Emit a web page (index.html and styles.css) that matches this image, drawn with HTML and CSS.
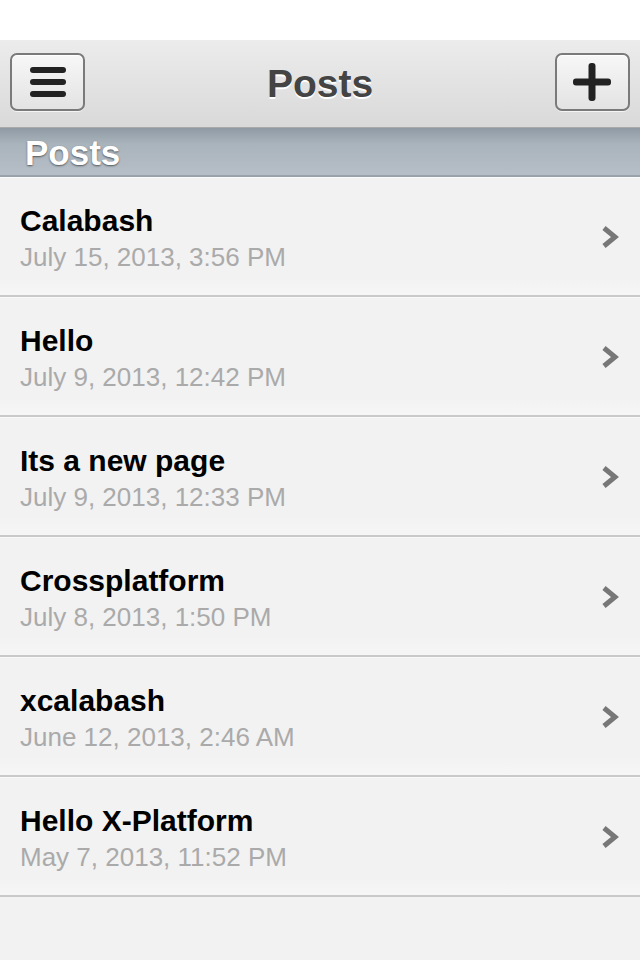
FILE: index.html
```html
<!DOCTYPE html>
<html>
<head>
<meta charset="utf-8">
<link rel="stylesheet" href="styles.css">
</head>
<body>
<div class="status"></div>
<header class="navbar">
  <button class="navbtn" aria-label="Menu">
    <svg width="36" height="32" viewBox="0 0 36 32"><g fill="#222"><rect x="0" y="1" width="36" height="6" rx="3"/><rect x="0" y="13" width="36" height="6" rx="3"/><rect x="0" y="25" width="36" height="6" rx="3"/></g></svg>
  </button>
  <h1 class="title">Posts</h1>
  <button class="navbtn" aria-label="Add">
    <svg width="38" height="38" viewBox="0 0 38 38"><g fill="#222"><rect x="15.5" y="0" width="7" height="38" rx="3"/><rect x="0" y="15.5" width="38" height="7" rx="3"/></g></svg>
  </button>
</header>
<div class="section">Posts</div>
<ul class="list">
  <li class="row"><div class="text"><div class="name">Calabash</div><div class="date">July 15, 2013, 3:56 PM</div></div><svg class="chev" width="18" height="24" viewBox="0 0 18 24"><path d="M3 3 L14 12 L3 21" fill="none" stroke="#777" stroke-width="5"/></svg></li>
  <li class="row"><div class="text"><div class="name">Hello</div><div class="date">July 9, 2013, 12:42 PM</div></div><svg class="chev" width="18" height="24" viewBox="0 0 18 24"><path d="M3 3 L14 12 L3 21" fill="none" stroke="#777" stroke-width="5"/></svg></li>
  <li class="row"><div class="text"><div class="name">Its a new page</div><div class="date">July 9, 2013, 12:33 PM</div></div><svg class="chev" width="18" height="24" viewBox="0 0 18 24"><path d="M3 3 L14 12 L3 21" fill="none" stroke="#777" stroke-width="5"/></svg></li>
  <li class="row"><div class="text"><div class="name">Crossplatform</div><div class="date">July 8, 2013, 1:50 PM</div></div><svg class="chev" width="18" height="24" viewBox="0 0 18 24"><path d="M3 3 L14 12 L3 21" fill="none" stroke="#777" stroke-width="5"/></svg></li>
  <li class="row"><div class="text"><div class="name">xcalabash</div><div class="date">June 12, 2013, 2:46 AM</div></div><svg class="chev" width="18" height="24" viewBox="0 0 18 24"><path d="M3 3 L14 12 L3 21" fill="none" stroke="#777" stroke-width="5"/></svg></li>
  <li class="row"><div class="text"><div class="name">Hello X-Platform</div><div class="date">May 7, 2013, 11:52 PM</div></div><svg class="chev" width="18" height="24" viewBox="0 0 18 24"><path d="M3 3 L14 12 L3 21" fill="none" stroke="#777" stroke-width="5"/></svg></li>
</ul>
</body>
</html>
```
FILE: styles.css
```css
* { box-sizing: border-box; }
html, body { margin: 0; padding: 0; }
body {
  width: 640px;
  height: 960px;
  background: #f2f2f2;
  font-family: "Liberation Sans", Arial, sans-serif;
  overflow: hidden;
}
.status { height: 40px; background: #fff; }
.navbar {
  height: 88px;
  display: flex;
  align-items: center;
  justify-content: space-between;
  padding: 0 10px;
  background: linear-gradient(#ececec, #d9d9d9);
  border-bottom: 1px solid #a9a9a9;
}
.navbtn {
  width: 75px;
  height: 58px;
  margin-top: -3px;
  border: 2px solid #7a7a7a;
  border-radius: 7px;
  background: linear-gradient(#f7f7f7, #e3e3e3);
  display: flex;
  align-items: center;
  justify-content: center;
  padding: 0;
  box-shadow: inset 0 1px 0 #fff, 0 1px 0 rgba(255,255,255,0.7);
}
.title {
  margin: 0;
  font-size: 39px;
  font-weight: bold;
  color: #444;
  text-shadow: 0 2px 0 #fff;
}
.section {
  height: 49px;
  padding-left: 25px;
  font-size: 35px;
  font-weight: bold;
  line-height: 49px;
  color: #fff;
  text-shadow: 0 1px 2px rgba(0,0,0,0.55);
  background: linear-gradient(#8f9ba4, #aab4bd 35%, #b6bec7);
  border-bottom: 2px solid #9aa2aa;
}
.list { list-style: none; margin: 0; padding: 0; }
.row {
  height: 120px;
  display: flex;
  align-items: center;
  justify-content: space-between;
  padding: 0 21px 0 20px;
  background: linear-gradient(#f2f2f2 85%, #f6f6f6);
  border-top: 1px solid #fafafa;
  border-bottom: 2px solid #c9c9c9;
}
.text { display: flex; flex-direction: column; margin-top: 5px; }
.name {
  font-size: 30px;
  font-weight: bold;
  color: #000;
  line-height: 36px;
}
.date {
  font-size: 26px;
  color: #aaa;
  line-height: 37px;
}
.chev { flex: none; }
```
